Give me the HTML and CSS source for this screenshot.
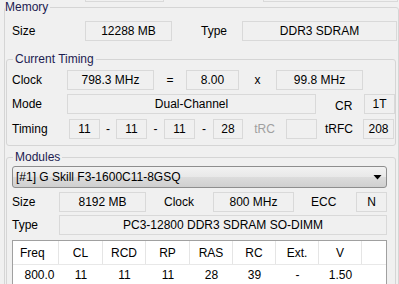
FILE: index.html
```html
<!DOCTYPE html>
<html>
<head>
<meta charset="utf-8">
<link rel="stylesheet" href="styles.css">
</head>
<body>
<div class="prev-row">
  <div class="field prev-a"></div>
  <div class="field prev-b"></div>
</div>
<fieldset class="group memory">
  <legend class="legend-mem">Memory</legend>
  <div class="row gen-row">
    <span class="lbl lbl-size">Size</span>
    <div class="field f-size">12288 MB</div>
    <span class="lbl lbl-type">Type</span>
    <div class="field f-type">DDR3 SDRAM</div>
  </div>

  <fieldset class="group timing">
    <legend class="legend-sub">Current Timing</legend>
    <div class="row">
      <span class="lbl lbl-clock">Clock</span>
      <div class="field f-87">798.3 MHz</div>
      <span class="op op-eq">=</span>
      <div class="field f-mult">8.00</div>
      <span class="op op-x">x</span>
      <div class="field f-87">99.8 MHz</div>
    </div>
    <div class="row row-mode">
      <span class="lbl lbl-clock">Mode</span>
      <div class="field f-mode">Dual-Channel</div>
      <span class="lbl lbl-cr">CR</span>
      <div class="field f-31">1T</div>
    </div>
    <div class="row row-timing">
      <span class="lbl lbl-timing">Timing</span>
      <div class="field f-31">11</div>
      <span class="dash d1">-</span>
      <div class="field f-31">11</div>
      <span class="dash d2">-</span>
      <div class="field f-31">11</div>
      <span class="dash d3">-</span>
      <div class="field f-30">28</div>
      <span class="lbl lbl-trc">tRC</span>
      <div class="field f-31"></div>
      <span class="lbl lbl-trfc">tRFC</span>
      <div class="field f-31">208</div>
    </div>
  </fieldset>

  <fieldset class="group modules">
    <legend class="legend-sub">Modules</legend>
    <div class="combo">
      <span class="combo-text">[#1] G Skill F3-1600C11-8GSQ</span>
      <svg class="combo-arrow" width="9" height="5" viewBox="0 0 9 5"><polygon points="0.5,0 8.5,0 4.5,4.5" fill="#000"/></svg>
    </div>
    <div class="row row-msize">
      <span class="lbl lbl-m">Size</span>
      <div class="field f-87">8192 MB</div>
      <span class="lbl lbl-mclock">Clock</span>
      <div class="field f-81">800 MHz</div>
      <span class="lbl lbl-ecc">ECC</span>
      <div class="field f-31">N</div>
    </div>
    <div class="row row-mtype">
      <span class="lbl lbl-m">Type</span>
      <div class="field f-mtype">PC3-12800 DDR3 SDRAM SO-DIMM</div>
    </div>
    <div class="table">
      <div class="thead">
        <div class="th th-first">Freq</div>
        <div class="th">CL</div>
        <div class="th">RCD</div>
        <div class="th">RP</div>
        <div class="th">RAS</div>
        <div class="th">RC</div>
        <div class="th">Ext.</div>
        <div class="th">V</div>
        <div class="th th-last"></div>
      </div>
      <div class="trow">
        <div class="td td-first">800.0</div>
        <div class="td">11</div>
        <div class="td">11</div>
        <div class="td">11</div>
        <div class="td">28</div>
        <div class="td">39</div>
        <div class="td">-</div>
        <div class="td">1.50</div>
        <div class="td"></div>
      </div>
    </div>
  </fieldset>
</fieldset>
</body>
</html>
```

FILE: styles.css
```css
* { box-sizing: border-box; }
html, body { margin: 0; padding: 0; }
body {
  width: 399px;
  height: 284px;
  overflow: hidden;
  background: #f0f0f0;
  font-family: "Liberation Sans", Arial, sans-serif;
  font-size: 12px;
  color: #000;
}
.prev-row {
  display: flex;
  height: 20px;
  margin-top: -18px;
  padding-left: 85px;
}
.prev-a { width: 79px; }
.prev-b { width: 135px; margin-left: 99px; }

.field {
  height: 20px;
  line-height: 18px;
  border: 1px solid #d9d9d9;
  background: #f0f0f0;
  text-align: center;
  white-space: nowrap;
  flex: none;
}
.group {
  border: 1px solid #d5d5d5;
  border-radius: 3px;
  min-width: 0;
  margin: 0;
}
.group legend {
  font-size: 12px;
  line-height: 15px;
  color: #1c1c50;
  padding: 0 2px;
}
.memory {
  margin: -2px 0 0 4px;
  padding: 6px 1px 0 1px;
}
.legend-mem { margin-left: -1px; padding: 0 2px 0 0 !important; }
.legend-sub { margin-left: 1px; }

.row {
  display: flex;
  align-items: center;
  height: 20px;
}
.lbl { flex: none; white-space: nowrap; }
.gen-row { padding-left: 6px; }
.lbl-size { width: 73px; }
.f-size { width: 87px; }
.lbl-type { width: 41px; margin-left: 29px; }
.f-type { width: 155px; }

.timing {
  margin: 11px 1px 0 0;
  padding: 3px 0 6px 5px;
}
.lbl-clock { width: 55px; }
.lbl-timing { width: 57px; }
.f-87 { width: 87px; }
.f-81 { width: 81px; }
.f-31 { width: 31px; }
.f-30 { width: 30px; }
.f-mult { width: 53px; }
.f-mode { width: 249px; }
.op { flex: none; text-align: center; }
.op-eq { width: 32px; }
.op-x { width: 37px; }
.row-mode { margin-top: 4px; }
.lbl-cr { width: 48px; padding-left: 19px; padding-top: 4px; }
.row-timing { margin-top: 5px; }
.dash { flex: none; text-align: center; }
.d1 { width: 16px; }
.d2 { width: 17px; }
.d3 { width: 18px; }
.lbl-trc { width: 43px; text-align: center; color: #a0a0a0; }
.lbl-trfc { width: 46px; padding-left: 8px; }

.modules {
  margin: 4px 1px 0 0;
  padding: 1px 0 0 5px;
}
.combo {
  width: 375px;
  height: 22px;
  border: 1px solid #8e8e8e;
  border-radius: 3px;
  background: linear-gradient(#f2f2f2, #e8e8e8 50%, #dcdcdc 51%, #cfcfcf);
  display: flex;
  align-items: center;
  justify-content: space-between;
  padding: 0 4px 0 3px;
}
.combo-text { white-space: nowrap; }
.combo-arrow { display: block; }
.row-msize { margin-top: 4px; }
.lbl-m { width: 47px; }
.lbl-mclock { width: 49px; margin-left: 18px; }
.lbl-ecc { width: 45px; margin-left: 17px; }
.row-mtype { margin-top: 3px; }
.f-mtype { width: 328px; }

.table {
  margin-top: 5px;
  width: 375px;
  height: 48px;
  border: 1px solid #a0a0a0;
  border-bottom: none;
  background: #fff;
}
.thead, .trow {
  display: grid;
  grid-template-columns: 46px 44px 43px 44px 43px 43px 43px 43px 1fr;
}
.thead {
  height: 24px;
  border-bottom: 1px solid #e8e8e8;
}
.th {
  padding-top: 2px;
  line-height: 21px;
  text-align: center;
  border-right: 1px solid #e5e5e5;
}
.th-last { border-right: none; }
.th-first, .td-first { text-align: left; padding-left: 7px; }
.trow { padding-top: 3px; }
.td { line-height: 15px; text-align: center; }
```
